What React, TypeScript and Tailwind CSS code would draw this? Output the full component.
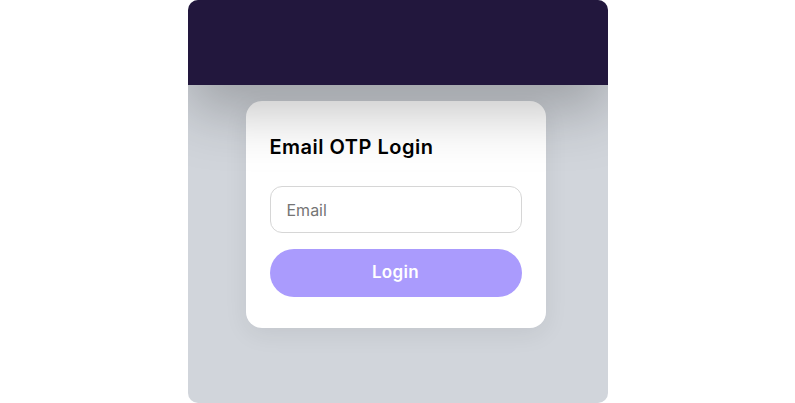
export default function App() {
  return (
    <div className="flex min-h-[403px] justify-center bg-white font-['Inter',sans-serif]">
      <div className="flex w-[420px] flex-col overflow-hidden rounded-[10px] bg-[#d1d5db]">
        {/* Header bar */}
        <div className="relative z-10 h-[85px] shrink-0 bg-[#22173d] shadow-[0_24px_60px_rgba(0,0,0,0.26)]" />

        {/* Card */}
        <div className="flex flex-1 justify-center pt-4 pr-1">
          <div className="h-fit w-[300px] rounded-2xl bg-white px-6 pt-8 pb-[31px] shadow-[0_6px_24px_rgba(0,0,0,0.07)]">
            <h1 className="mb-[25px] text-[20px] leading-7 font-semibold tracking-[0.025em] text-black">
              Email OTP Login
            </h1>
            <input
              type="email"
              placeholder="Email"
              className="h-[47px] w-full rounded-xl border border-[#d6d6d6] px-4 text-base text-gray-800 placeholder:text-[#757575] outline-none"
            />
            <button className="mt-4 h-12 w-full rounded-full bg-[#aa9bfd] text-[17px] font-semibold tracking-[0.02em] text-white">
              Login
            </button>
          </div>
        </div>
      </div>
    </div>
  );
}
